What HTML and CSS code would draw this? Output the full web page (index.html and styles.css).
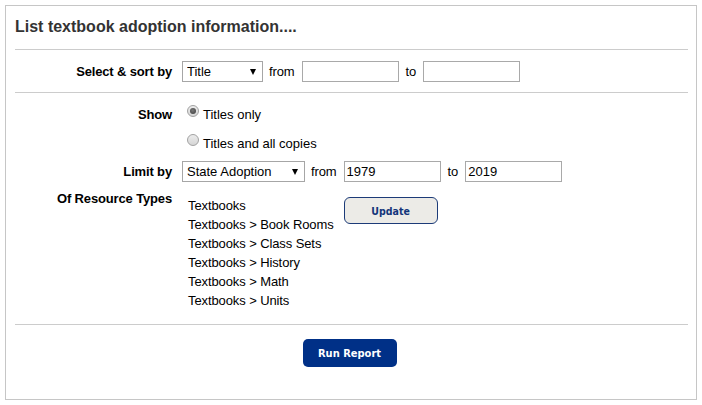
FILE: index.html
```html
<!DOCTYPE html>
<html lang="en">
<head>
<meta charset="utf-8">
<title>List textbook adoption information</title>
<link rel="stylesheet" href="styles.css">
</head>
<body>
<div class="panel">
  <h1 class="title">List textbook adoption information....</h1>
  <div class="rule"></div>

  <div class="sort-row">
    <div class="label">Select &amp; sort by</div>
    <div class="controls">
      <span class="select-wrap sel-title">
        <select class="select"><option>Title</option></select>
      </span>
      <span class="word word-from">from</span>
      <input class="text" type="text" value="">
      <span class="word word-to">to</span>
      <input class="text" type="text" value="">
    </div>
  </div>
  <div class="rule"></div>

  <div class="options">
    <div class="label label-show">Show</div>
    <div class="radios">
      <label class="radio-line"><input class="radio" type="radio" name="show" checked><span>Titles only</span></label>
      <label class="radio-line"><input class="radio" type="radio" name="show"><span>Titles and all copies</span></label>
    </div>

    <div class="label label-limit">Limit by</div>
    <span class="select-wrap sel-limit">
      <select class="select"><option>State Adoption</option></select>
    </span>
    <span class="word word-from">from</span>
    <input class="text" type="text" value="1979">
    <span class="word word-to">to</span>
    <input class="text" type="text" value="2019">

    <div class="label label-types">Of Resource Types</div>
    <ul class="types">
      <li>Textbooks</li>
      <li>Textbooks &gt; Book Rooms</li>
      <li>Textbooks &gt; Class Sets</li>
      <li>Textbooks &gt; History</li>
      <li>Textbooks &gt; Math</li>
      <li>Textbooks &gt; Units</li>
    </ul>
    <button class="btn-update" type="button">Update</button>
  </div>
  <div class="rule"></div>

  <div class="run-row">
    <button class="btn-run" type="button">Run Report</button>
  </div>
</div>
</body>
</html>
```

FILE: styles.css
```css
html, body {
  margin: 0;
  padding: 0;
  background: #fff;
}

body {
  font-family: "Liberation Sans", Arial, sans-serif;
  font-size: 13px;
  color: #000;
}

.panel {
  margin: 5px;
  height: 395px;
  box-sizing: border-box;
  border: 1px solid #c6c6c6;
  padding: 0 8px 0 9px;
}

.title {
  margin: 0;
  padding: 12px 0 13px;
  font-size: 16px;
  line-height: 18px;
  font-weight: bold;
  color: #333;
}

.rule {
  height: 1px;
  background: #cccccc;
}

.label {
  font-weight: bold;
  text-align: right;
  padding-right: 4px;
  line-height: 16px;
  letter-spacing: -0.15px;
}

/* Select & sort row */
.sort-row {
  display: grid;
  grid-template-columns: 161px auto;
  justify-content: start;
  column-gap: 6px;
  align-items: baseline;
  padding: 11px 0 10px;
}

.controls {
  display: flex;
  align-items: baseline;
  gap: 6px;
}

.word {
  line-height: 16px;
  letter-spacing: -0.1px;
}

.word-from {
  padding-right: 1px;
}

.word-to {
  padding: 0 1px;
}

.select-wrap {
  position: relative;
  display: inline-block;
}

.select-wrap::after {
  content: "";
  position: absolute;
  right: 7px;
  top: 8px;
  border-left: 3px solid transparent;
  border-right: 3px solid transparent;
  border-top: 6px solid #000;
  pointer-events: none;
}

.select {
  -webkit-appearance: none;
  appearance: none;
  display: block;
  box-sizing: border-box;
  height: 21px;
  margin: 0;
  padding: 0 0 0 4px;
  border: 1px solid #a6a6a6;
  border-radius: 0;
  background: #fff;
  font-family: "Liberation Sans", Arial, sans-serif;
  font-size: 13px;
  color: #000;
}

.sel-title .select { width: 81px; }
.sel-limit .select { width: 123px; }

.text {
  box-sizing: border-box;
  width: 97px;
  height: 21px;
  margin: 0;
  padding: 0 2px;
  border: 1px solid #a9a9a9;
  border-radius: 0;
  font-family: "Liberation Sans", Arial, sans-serif;
  font-size: 13px;
  color: #000;
  background: #fff;
}

/* Options section */
.options {
  display: grid;
  grid-template-columns: 161px 123px auto 97px auto 97px;
  justify-content: start;
  column-gap: 6px;
  padding: 14px 0 14px;
  align-items: baseline;
}

.label-show {
  grid-column: 1;
  grid-row: 1;
  align-self: start;
}

.radios {
  grid-column: 2 / 7;
  grid-row: 1;
  align-self: start;
  display: flex;
  flex-direction: column;
  gap: 13px;
  padding-left: 5px;
}

.radio-line {
  display: flex;
  align-items: flex-start;
  line-height: 16px;
}

.radio {
  -webkit-appearance: none;
  appearance: none;
  box-sizing: border-box;
  width: 12px;
  height: 12px;
  margin: -2px 4px 0 0;
  border: 1px solid #a2a2a2;
  border-radius: 50%;
  background: linear-gradient(#ececec, #d6d6d6);
  position: relative;
  flex: none;
}

.radio:checked::after {
  content: "";
  position: absolute;
  left: 2px;
  top: 2px;
  width: 6px;
  height: 6px;
  border-radius: 50%;
  background: radial-gradient(circle at 45% 40%, #777, #3c3c3c);
}

.label-limit {
  grid-column: 1;
  grid-row: 2;
  margin-top: 9px;
}

.options > .select-wrap,
.options > .word,
.options > .text {
  grid-row: 2;
  margin-top: 9px;
}

.label-types {
  grid-column: 1;
  grid-row: 3;
  align-self: start;
  margin-top: 9px;
}

.types {
  grid-column: 2 / 4;
  grid-row: 3;
  align-self: start;
  list-style: none;
  margin: 14px 0 0;
  padding: 0 0 0 6px;
  line-height: 19px;
  letter-spacing: -0.1px;
}

.btn-update {
  grid-column: 4;
  grid-row: 3;
  align-self: start;
  justify-self: start;
  margin-top: 15px;
  width: 94px;
  height: 27px;
  padding: 0;
  border: 1px solid #1c3b78;
  border-radius: 6px;
  background: #ecebe7;
  color: #13357a;
  font-family: "DejaVu Sans Condensed", "DejaVu Sans", sans-serif;
  font-weight: bold;
  font-size: 10.5px;
}

/* Run row */
.run-row {
  display: flex;
  justify-content: center;
  padding: 14px 4px 0 0;
}

.btn-run {
  width: 94px;
  height: 28px;
  padding: 0;
  border: none;
  border-radius: 5px;
  background: #003087;
  color: #fff;
  font-family: "DejaVu Sans Condensed", "DejaVu Sans", sans-serif;
  font-weight: bold;
  font-size: 11px;
}
```
